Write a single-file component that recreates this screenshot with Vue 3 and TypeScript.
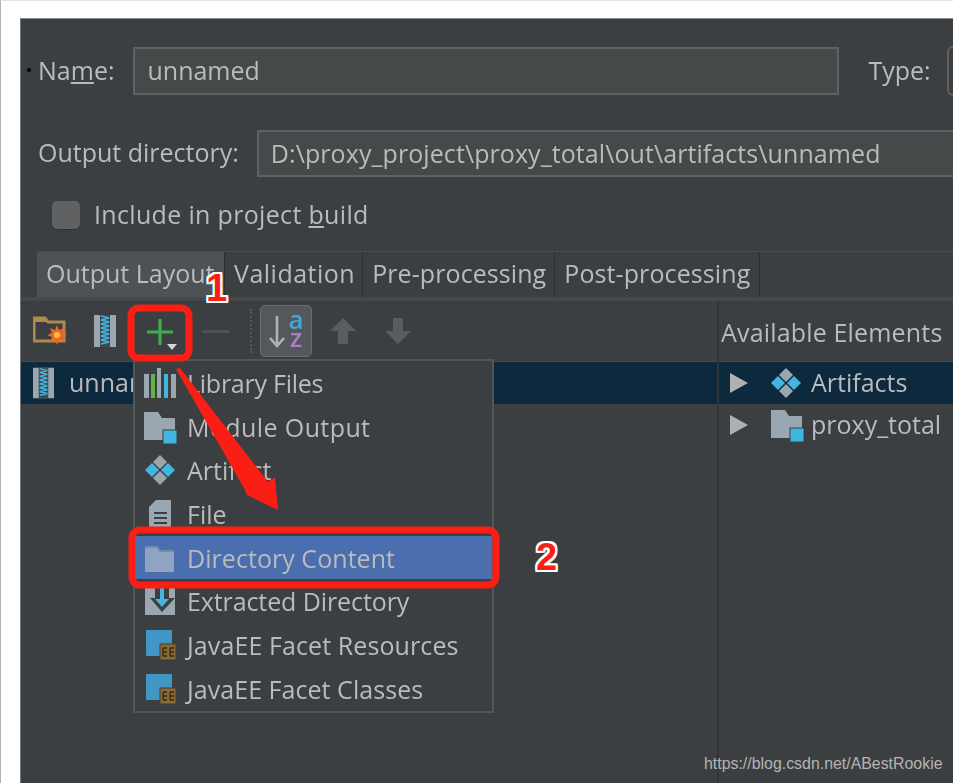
<script setup lang="ts">
const menu = [
  { icon: 'lib', label: 'Library Files', ls: -0.25 },
  { icon: 'module', label: 'Module Output', ls: 0.4 },
  { icon: 'artifact', label: 'Artifact', ls: 0 },
  { icon: 'file', label: 'File', ls: 0 },
  { icon: 'dir', label: 'Directory Content', ls: 0.05, active: true },
  { icon: 'extract', label: 'Extracted Directory', ls: -0.1 },
  { icon: 'ee', label: 'JavaEE Facet Resources', ls: 0.1 },
  { icon: 'ee', label: 'JavaEE Facet Classes', ls: 0.05 },
]
const tabs = ['Output Layout', 'Validation', 'Pre-processing', 'Post-processing']
</script>

<template>
  <div class="page">
    <svg class="defs" width="0" height="0">
      <defs>
        <symbol id="i-zip" viewBox="0 0 22 32">
          <rect x="0" y="0" width="22" height="32" fill="#9aa7b0" />
          <rect x="6" y="0" width="10" height="32" fill="#3f4a50" />
          <path d="M7 1l8 2-8 2 8 2-8 2 8 2-8 2 8 2-8 2 8 2-8 2 8 2-8 2 8 2-8 2" fill="none" stroke="#40b6e0" stroke-width="1.4" />
        </symbol>
        <symbol id="i-artifact" viewBox="0 0 32 32">
          <path d="M16 1l7 7-7 7-7-7z" fill="#9aa7b0" />
          <path d="M16 17l7 7-7 7-7-7z" fill="#9aa7b0" />
          <path d="M8 9l7 7-7 7-7-7z" fill="#40b6e0" />
          <path d="M24 9l7 7-7 7-7-7z" fill="#40b6e0" />
        </symbol>
        <symbol id="i-module" viewBox="0 0 34 34">
          <path d="M1 2h14l4 6h13v14H21v8H1z" fill="#9aa7b0" />
          <rect x="20" y="20" width="14" height="14" fill="#40b6e0" stroke="#3c3f41" stroke-width="1" />
        </symbol>
      </defs>
    </svg>
    <div class="window">
      <div class="row name-row">
        <span class="bullet"></span>
        <label class="label">Na<u>m</u>e:</label>
        <div class="field name-field">unnamed</div>
        <label class="label type-label">Type:</label>
        <div class="type-select"></div>
      </div>
      <div class="row output-row">
        <label class="label">Output directory:</label>
        <div class="field output-field">D:\proxy_project\proxy_total\out\artifacts\unnamed</div>
      </div>
      <div class="row check-row">
        <span class="checkbox"></span>
        <label class="label include">Include in project <u>b</u>uild</label>
      </div>
      <div class="tabs">
        <div v-for="(t, i) in tabs" :key="t" class="tab" :class="['t' + i, { on: i === 0 }]">{{ t }}</div>
      </div>
      <div class="panes">
        <div class="left">
          <div class="toolbar">
            <svg class="tool folder" width="34" height="32" viewBox="0 0 34 32">
              <path d="M1 3h11l3 4h16v19H1z" fill="none" stroke="#b08a4a" stroke-width="3" />
              <path d="M1 3h11l3 4H1z" fill="#b08a4a" />
              <path d="M24 10l2 5 5-2-2 5 5 2-5 2 2 5-5-2-2 5-2-5-5 2 2-5-5-2 5-2-2-5 5 2z" fill="#f26522" />
              <circle cx="24" cy="20" r="3" fill="#f4c04e" />
            </svg>
            <svg class="tool zip" width="22" height="32"><use href="#i-zip" /></svg>
            <svg class="tool plus" width="36" height="36" viewBox="0 0 36 36">
              <path d="M4 15h26M17 2v26" stroke="#3fae4a" stroke-width="3.2" fill="none" />
              <path d="M24 27h10l-5 6z" fill="#d4d4d4" />
            </svg>
            <span class="minus"></span>
            <span class="dots"></span>
            <div class="sort">
              <svg width="18" height="34" viewBox="0 0 18 34">
                <path d="M9 2v30M2 24l7 8 7-8" fill="none" stroke="#afb1b3" stroke-width="2.6" />
              </svg>
              <div class="az">
                <span class="a">a</span>
                <span class="z">z</span>
              </div>
            </div>
            <svg class="tool up" width="28" height="28" viewBox="0 0 28 28">
              <path d="M14 1L27 14H19V27H9V14H1z" fill="#5a5d5f" />
            </svg>
            <svg class="tool down" width="28" height="28" viewBox="0 0 28 28">
              <path d="M14 27L27 14H19V1H9V14H1z" fill="#5a5d5f" />
            </svg>
          </div>
          <div class="tree-row selected">
            <svg class="zip-small" width="21" height="32"><use href="#i-zip" /></svg>
            <span>unnamed</span>
          </div>
        </div>
        <div class="right">
          <div class="avail">Available Elements</div>
          <div class="tree-row selected right-row">
            <span class="tri"></span>
            <svg width="32" height="32" class="art"><use href="#i-artifact" /></svg>
            <span>Artifacts</span>
          </div>
          <div class="tree-row right-row">
            <span class="tri"></span>
            <svg width="34" height="34"><use href="#i-module" /></svg>
            <span>proxy_total</span>
          </div>
        </div>
      </div>
    </div>

    <div class="menu">
      <div v-for="m in menu" :key="m.label" class="item" :class="{ active: m.active }">
        <span class="ico">
          <svg v-if="m.icon === 'lib'" width="34" height="30" viewBox="0 0 34 30">
            <rect x="1" y="6" width="5" height="24" fill="#9aa7b0" />
            <rect x="8" y="6" width="4" height="24" fill="#62b543" />
            <rect x="14" y="0" width="4" height="30" fill="#9aa7b0" />
            <rect x="21" y="6" width="4" height="24" fill="#40b6e0" />
            <rect x="28" y="6" width="5" height="24" fill="#9aa7b0" />
          </svg>
          <svg v-else-if="m.icon === 'module'" width="34" height="34"><use href="#i-module" /></svg>
          <svg v-else-if="m.icon === 'artifact'" width="32" height="32"><use href="#i-artifact" /></svg>
          <svg v-else-if="m.icon === 'file'" width="24" height="30" viewBox="0 0 24 30">
            <path d="M8 1h15v28H1V8z" fill="#9aa7b0" />
            <path d="M6 14h13M6 19h13M6 24h13" stroke="#3c3f41" stroke-width="2" />
          </svg>
          <svg v-else-if="m.icon === 'dir'" width="32" height="30" viewBox="0 0 32 30">
            <path d="M1 5V3h12l3 4h14v22H1z" fill="#8ea4c0" />
            <path d="M1 3h12l3 4h14v2H16l-3-4H1z" fill="#6f8bb3" />
          </svg>
          <svg v-else-if="m.icon === 'extract'" width="32" height="30" viewBox="0 0 32 30">
            <path d="M1 1h30v28H1z" fill="#9aa7b0" />
            <path d="M11 0h14v12h6L18 26 6 12h5z" fill="#3c3f41" />
            <path d="M16 1h4v12h5l-7 8-7-8h5z" fill="#40b6e0" />
          </svg>
          <svg v-else width="32" height="32" viewBox="0 0 32 32">
            <rect x="2" y="1" width="26" height="26" rx="1" fill="#4296c6" />
            <rect x="16" y="15" width="16" height="16" fill="#8a6a2e" stroke="#3c3f41" stroke-width="1" />
            <path d="M19 19h4M19 23h4M19 27h4M19 19v8M26 19h4M26 23h4M26 27h4M26 19v8" stroke="#2f2a20" stroke-width="1.3" fill="none" />
          </svg>
        </span>
        <span class="text" :style="{ letterSpacing: m.ls + 'px' }">{{ m.label }}</span>
      </div>
    </div>

    <svg class="marks" width="953" height="783" viewBox="0 0 953 783">
      <rect x="131" y="308" width="58" height="50" rx="8" class="box" />
      <rect x="132" y="530" width="364" height="55" rx="8" class="box" />
      <path d="M176 369L180 368L268 482L275 477L278 510L247 495L245 490z" fill="#fb1e14" />
    </svg>
    <span class="num one">1</span>
    <span class="num two">2</span>
    <span class="mark">https://blog.csdn.net/ABestRookie</span>
  </div>
</template>

<style>
html, body { margin: 0; background: #fff; }
</style>

<style scoped>
.page {
  position: relative;
  width: 953px;
  height: 783px;
  box-sizing: border-box;
  padding: 17px 0 0 19px;
  background: #fff;
  overflow: hidden;
  border-top: 1px solid #e4e4e4;
  border-left: 1px solid #b4b4b4;
  font-family: "Open Sans", "Noto Sans", sans-serif;
  font-size: 25px;
  color: #bbbbbb;
}
.defs { position: absolute; }
.window {
  height: 100%;
  background: #3c3f41;
  border-top: 1px solid #8a8c8e;
  border-left: 1px solid #6d7580;
  display: flex;
  flex-direction: column;
  overflow: hidden;
  filter: blur(0.6px);
}
.row { display: flex; align-items: center; padding-left: 17px; flex: none; }
.name-row { margin-top: 28px; height: 48px; position: relative; }
.bullet { position: absolute; left: 6px; top: 21px; width: 4px; height: 4px; border-radius: 50%; background: #000; }
.label { white-space: nowrap; line-height: 1; padding-bottom: 2px; }
.include { letter-spacing: 0.33px; padding-bottom: 1px; }
.field {
  box-sizing: border-box;
  background: #45494a;
  border: 2px solid #5e6061;
  padding: 0 0 2px 12px;
  white-space: nowrap;
  display: flex;
  align-items: center;
  flex: none;
}
.name-field { width: 706px; height: 48px; margin-left: 19px; padding-left: 12px; }
.type-label { margin-left: 29px; }
.type-select {
  flex: none;
  width: 40px;
  height: 50px;
  margin-left: 16px;
  border: 2px solid #5e6061;
  border-radius: 6px;
  box-sizing: border-box;
}
.output-row { margin-top: 35px; height: 47px; }
.output-field { width: 720px; height: 47px; margin-left: 18px; letter-spacing: 0.08px; }
.check-row { margin-top: 24px; height: 28px; padding-left: 31px; gap: 14px; }
.checkbox {
  flex: none;
  width: 28px;
  height: 28px;
  border-radius: 5px;
  background: #5f6162;
  box-shadow: 0 1px 0 #2f3133;
}
.tabs {
  display: flex;
  margin-top: 22px;
  margin-left: 16px;
  height: 46px;
  flex: none;
  border-top: 1px solid #47494b;
  box-sizing: border-box;
}
.tab {
  box-sizing: border-box;
  height: 45px;
  padding: 0 9px;
  line-height: 42px;
  white-space: nowrap;
  border-right: 1px solid #2f3133;
  background: #3c3f41;
}
.t1 { letter-spacing: 0.5px; padding-right: 7px; }
.t2 { letter-spacing: 0.08px; padding-right: 8px; }
.t3 { letter-spacing: 0.1px; }
.tab.on { background: #4e5254; width: 188px; padding-right: 0; overflow: hidden; }
.panes {
  flex: 1;
  display: flex;
  border-top: 4px solid #46494b;
}
.left { width: 696px; flex: none; border-right: 2px solid #323537; }
.right { flex: 1; }
.toolbar {
  box-sizing: border-box;
  display: flex;
  align-items: center;
  height: 61px;
  padding-left: 12px;
  border-bottom: 1px solid #47494b;
}
.tool { flex: none; }
.zip { margin-left: 27px; }
.plus { margin-left: 27px; margin-top: 8px; }
.minus { width: 27px; height: 3px; background: #4f5254; margin-left: 23px; flex: none; }
.dots { width: 0; height: 44px; border-left: 2px dotted #55585a; margin-left: 21px; flex: none; }
.sort {
  box-sizing: border-box;
  width: 52px;
  height: 52px;
  margin-left: 8px;
  border-radius: 5px;
  background: #55585a;
  border: 1px solid #6a6d70;
  display: flex;
  align-items: center;
  justify-content: center;
  gap: 2px;
  flex: none;
}
.az {
  display: flex;
  flex-direction: column;
  align-items: center;
  font-size: 26px;
  font-weight: 600;
  line-height: 18px;
  padding-bottom: 6px;
}
.a { color: #40a8d8; }
.z { color: #a87ec8; }
.up { margin-left: 17px; }
.down { margin-left: 27px; }
.tree-row {
  box-sizing: border-box;
  height: 42px;
  padding-bottom: 3px;
  display: flex;
  align-items: center;
  white-space: nowrap;
}
.selected { background: #0d293e; }
.zip-small { margin: 3px 15px 0 12px; flex: none; }
.avail { box-sizing: border-box; height: 61px; line-height: 62px; padding-left: 2px; white-space: nowrap; letter-spacing: 0.17px; border-bottom: 1px solid #47494b; }
.right-row { padding-left: 11px; }
.tri {
  width: 0;
  height: 0;
  border-left: 18px solid #b0b0b0;
  border-top: 10px solid transparent;
  border-bottom: 10px solid transparent;
  margin: 3px 22px 0 0;
  flex: none;
}
.right-row svg { flex: none; margin: 3px 7px 0 0; }
.right-row svg.art { margin-right: 9px; }
.menu {
  position: absolute;
  left: 132px;
  top: 358px;
  width: 361px;
  box-sizing: border-box;
  background: #3c3f41;
  border: 2px solid #515658;
  height: 354px;
  filter: blur(0.6px);
}
.item {
  display: flex;
  align-items: center;
  height: 43.7px;
  white-space: nowrap;
}
.item.active { background: #4b6eaf; }
.ico { width: 50px; margin-right: 2px; flex: none; display: flex; justify-content: center; }
.marks { position: absolute; left: -1px; top: -1px; pointer-events: none; }
.box { fill: none; stroke: #fb1e14; stroke-width: 7; }
.num {
  position: absolute;
  font-family: "Liberation Sans", Arial, sans-serif;
  font-weight: 700;
  font-size: 38px;
  line-height: 1;
  color: #fb1e14;
  text-shadow: 2px 0 0 #fff, -2px 0 0 #fff, 0 2px 0 #fff, 0 -2px 0 #fff, 2px 2px 0 #fff, -2px -2px 0 #fff, 2px -2px 0 #fff, -2px 2px 0 #fff;
}
.one { left: 205px; top: 268px; }
.two { left: 535px; top: 537px; }
.mark {
  position: absolute;
  left: 703px;
  top: 753px;
  font-family: "Liberation Sans", Arial, sans-serif;
  font-size: 15.9px;
  line-height: 20px;
  color: #b4b4b4;
  white-space: nowrap;
}
</style>
